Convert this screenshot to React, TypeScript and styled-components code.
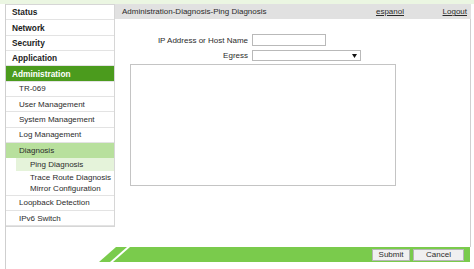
import React from "react"
import styled, { createGlobalStyle } from "styled-components"

const GlobalStyle = createGlobalStyle`
  html, body {
    margin: 0;
    padding: 0;
    background: #fff;
  }
  body {
    font-family: "Liberation Sans", Arial, sans-serif;
    font-size: 8px;
    color: #2b2b2b;
  }
`

type Level = 0 | 1 | 2
type Tone = "none" | "main" | "section" | "page"

type MenuItem = { label: string; level: Level; tone?: Tone }

const menu: MenuItem[] = [
  { label: "Status", level: 0 },
  { label: "Network", level: 0 },
  { label: "Security", level: 0 },
  { label: "Application", level: 0 },
  { label: "Administration", level: 0, tone: "main" },
  { label: "TR-069", level: 1 },
  { label: "User Management", level: 1 },
  { label: "System Management", level: 1 },
  { label: "Log Management", level: 1 },
  { label: "Diagnosis", level: 1, tone: "section" },
  { label: "Ping Diagnosis", level: 2, tone: "page" },
  { label: "Trace Route Diagnosis", level: 2 },
  { label: "Mirror Configuration", level: 2 },
  { label: "Loopback Detection", level: 1 },
  { label: "IPv6 Switch", level: 1 },
]

export default function App() {
  return (
    <>
      <GlobalStyle />
      <Page>
        <TopStrip />
        <Frame>
          <Columns>
            <Sidebar>
              {menu.map((item, i) => {
                const next = menu[i + 1]
                const divider = item.level < 2 || !next || next.level < 2
                return (
                  <Row key={item.label} $level={item.level} $tone={item.tone ?? "none"} $divider={divider}>
                    <RowLabel $level={item.level} $tone={item.tone ?? "none"}>{item.label}</RowLabel>
                  </Row>
                )
              })}
            </Sidebar>
            <Main>
              <Header>
                <Crumbs>Administration-Diagnosis-Ping Diagnosis</Crumbs>
                <HeaderLink $width={40}>espanol</HeaderLink>
                <HeaderLink $width={63}>Logout</HeaderLink>
              </Header>
              <Content>
                <Form>
                  <Label>IP Address or Host Name</Label>
                  <TextInput type="text" />
                  <Label>Egress</Label>
                  <SelectBox>
                    <Select defaultValue="">
                      <option value=""></option>
                    </Select>
                    <Arrow width="5" height="4" viewBox="0 0 5 4">
                      <path d="M0 0 L5 0 L2.5 4 Z" fill="#111" />
                    </Arrow>
                  </SelectBox>
                </Form>
                <Result readOnly />
              </Content>
            </Main>
          </Columns>
          <Footer>
            <Lead width="32" height="15" viewBox="0 0 32 15">
              <polygon points="0,15 17,0 28,0 11,15" fill="#7acb4c" />
              <polygon points="14,15 31,0 32,0 32,15" fill="#7acb4c" />
            </Lead>
            <Bar>
              <Button $width={38}>Submit</Button>
              <Button $width={51}>Cancel</Button>
            </Bar>
          </Footer>
        </Frame>
      </Page>
    </>
  )
}

const Page = styled.div`
  display: flex;
  flex-direction: column;
  height: 100vh;
`

const TopStrip = styled.div`
  height: 4px;
  background: #ebf6e2;
`

const Frame = styled.div`
  flex: 1;
  display: flex;
  flex-direction: column;
  margin-left: 5px;
  border-left: 1px solid #cfcfcf;
`

const Columns = styled.div`
  display: flex;
  align-items: flex-start;
`

const Sidebar = styled.div`
  width: 108px;
  border-top: 1px solid #d6d6d6;
  border-right: 1px solid #d6d6d6;
  border-bottom: 1px solid #d6d6d6;
`

const rowBg: Record<Tone, string> = {
  none: "#fff",
  main: "#4b9b1d",
  section: "#b8e09d",
  page: "#e5f3da",
}

const Row = styled.div<{ $level: Level; $tone: Tone; $divider: boolean }>`
  box-sizing: border-box;
  height: ${(p) => (p.$level === 2 ? "12.4px" : "15.35px")};
  display: flex;
  align-items: center;
  background: ${(p) => (p.$tone === "page" ? "#fff" : rowBg[p.$tone])};
  border-bottom: ${(p) => (p.$divider && p.$tone !== "section" ? "1px solid #e3e3e3" : "none")};
  ${(p) => p.$tone === "page" && `background: linear-gradient(to right, #fff 10px, ${rowBg.page} 10px);`}
`

const RowLabel = styled.span<{ $level: Level; $tone: Tone }>`
  padding-left: ${(p) => [6, 13, 24][p.$level]}px;
  font-size: ${(p) => (p.$level === 0 ? "8.3px" : "8px")};
  font-weight: ${(p) => (p.$level === 0 ? 700 : 400)};
  color: ${(p) => (p.$tone === "main" ? "#fff" : p.$level === 0 ? "#1c1c1c" : "#2b2b2b")};
  white-space: nowrap;
`

const Main = styled.div`
  flex: 1;
  margin-right: 3px;
`

const Header = styled.div`
  height: 15px;
  display: flex;
  align-items: center;
  background: #e1e1e1;
  padding: 0 4px 0 7px;
  color: #2b2b2b;
`

const Crumbs = styled.span`
  flex: 1;
`

const HeaderLink = styled.a<{ $width: number }>`
  color: #2b2b2b;
  text-decoration: underline;
  width: ${(p) => p.$width}px;
  text-align: right;
  cursor: pointer;
`

const Content = styled.div`
  box-sizing: border-box;
  height: 228px;
  border-right: 1px solid #cfcfcf;
  padding-top: 15px;
`

const Form = styled.div`
  display: grid;
  grid-template-columns: 133px auto;
  column-gap: 4px;
  row-gap: 4px;
  align-items: center;
`

const Label = styled.label`
  text-align: right;
  color: #2b2b2b;
`

const TextInput = styled.input`
  box-sizing: border-box;
  width: 74px;
  height: 12px;
  margin: 0;
  padding: 0 2px;
  border: 1px solid #b9b9b9;
  background: #fff;
`

const SelectBox = styled.div`
  position: relative;
  width: 109px;
  height: 11px;
`

const Select = styled.select`
  box-sizing: border-box;
  appearance: none;
  width: 100%;
  height: 100%;
  margin: 0;
  padding: 0;
  border: 1px solid #b9b9b9;
  border-radius: 0;
  background: #fff;
  font-size: 8px;
`

const Arrow = styled.svg`
  position: absolute;
  right: 4px;
  top: 4px;
`

const Result = styled.textarea`
  display: block;
  box-sizing: border-box;
  width: 266px;
  height: 122px;
  margin: 3px 0 0 15px;
  padding: 0;
  border: 1px solid #c4c4c4;
  resize: none;
  background: #fff;
`

const Footer = styled.div`
  display: flex;
  height: 15px;
  margin-left: 93px;
  margin-right: 4px;
`

const Lead = styled.svg`
  display: block;
  flex: none;
`

const Bar = styled.div`
  flex: 1;
  display: flex;
  justify-content: flex-end;
  align-items: center;
  gap: 3px;
  padding-right: 6px;
  background: #7acb4c;
`

const Button = styled.button<{ $width: number }>`
  box-sizing: border-box;
  width: ${(p) => p.$width}px;
  height: 12px;
  margin: 0;
  padding: 0;
  border: 1px solid #b5b5b5;
  border-radius: 0;
  background: #f0f0f0;
  color: #2b2b2b;
  font-family: "Liberation Sans", Arial, sans-serif;
  font-size: 8px;
  line-height: 10px;
`
